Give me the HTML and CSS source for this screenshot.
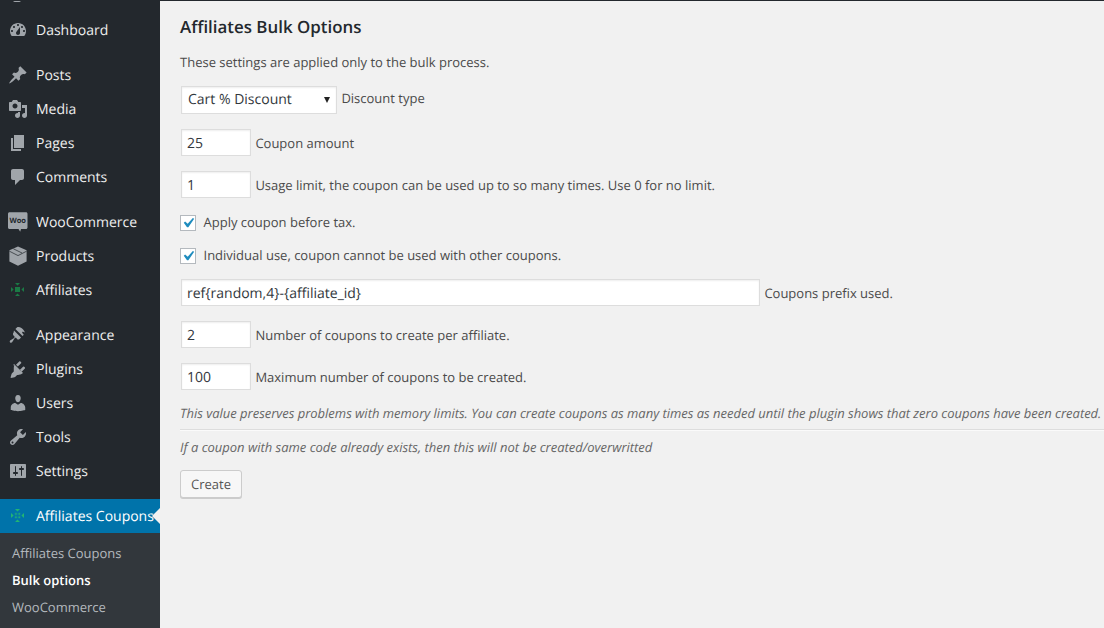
FILE: index.html
```html
<!DOCTYPE html>
<html lang="en">
<head>
    <meta charset="UTF-8">
    <title>Affiliates Bulk Options</title>
    <link rel="stylesheet" href="styles.css">
</head>
<body>

    <!-- Admin menu -->
    <nav class="sidebar">
        <span class="menu-stub"></span>
        <ul class="menu">
            <li class="menu-item"><svg class="icon" viewBox="0 0 20 20"><path fill-rule="evenodd" d="M3.76 16h12.48c1.1-1.37 1.76-3.11 1.76-5 0-4.42-3.58-8-8-8s-8 3.58-8 8c0 1.89.66 3.63 1.76 5zM10 4c.55 0 1 .45 1 1s-.45 1-1 1-1-.45-1-1 .45-1 1-1zM6 6c.55 0 1 .45 1 1s-.45 1-1 1-1-.45-1-1 .45-1 1-1zm8 0c.55 0 1 .45 1 1s-.45 1-1 1-1-.45-1-1 .45-1 1-1zm-5.37 5.55L12 7v6c0 1.1-.9 2-2 2s-2-.9-2-2c0-.57.24-1.08.63-1.45zM4 10c.55 0 1 .45 1 1s-.45 1-1 1-1-.45-1-1 .45-1 1-1zm12 0c.55 0 1 .45 1 1s-.45 1-1 1-1-.45-1-1 .45-1 1-1z"/></svg>Dashboard</li>
            <li class="menu-gap"></li>
            <li class="menu-item"><svg class="icon" viewBox="0 0 20 20"><path d="M10.44 3.02l1.82-1.82 6.36 6.35-1.83 1.82c-1.05-.68-2.48-.57-3.41.36l-.75.75c-.92.93-1.04 2.35-.35 3.41l-1.83 1.82-2.41-2.41-2.8 2.79c-.42.42-3.38 2.71-3.8 2.29s1.86-3.39 2.28-3.81l2.79-2.79L4.1 9.36l1.83-1.82c1.05.69 2.48.57 3.4-.36l.75-.75c.93-.92 1.05-2.35.36-3.41z"/></svg>Posts</li>
            <li class="menu-item"><svg class="icon" viewBox="0 0 20 20"><path fill-rule="evenodd" d="M13 11V4c0-.55-.45-1-1-1h-1.67L9 1H5L3.67 3H2c-.55 0-1 .45-1 1v7c0 .55.45 1 1 1h10c.55 0 1-.45 1-1zM7 4.500c1.380 0 2.500 1.120 2.500 2.500S8.380 9.500 7 9.500 4.500 8.380 4.500 7 5.620 4.500 7 4.500zM14 6h5v10.500c0 1.380-1.120 2.500-2.500 2.500S14 17.880 14 16.500s1.120-2.500 2.500-2.500c.17 0 .34.020.5.050V9h-3V6zm-4 8.050V13h2v3.500c0 1.380-1.120 2.500-2.500 2.500S7 17.880 7 16.500 8.120 14 9.500 14c.17 0 .34.020.5.050z"/></svg>Media</li>
            <li class="menu-item"><svg class="icon" viewBox="0 0 20 20"><path d="M6 15V2h10v13H6zm-1 1h8v2H3V5h2v11z"/></svg>Pages</li>
            <li class="menu-item"><svg class="icon" viewBox="0 0 20 20"><path d="M5 2h9c1.100 0 2 .9 2 2v7c0 1.100-.9 2-2 2h-2l-5 5v-5H5c-1.100 0-2-.9-2-2V4c0-1.100.9-2 2-2z"/></svg>Comments</li>
            <li class="menu-gap"></li>
            <li class="menu-item"><svg class="icon" viewBox="0 0 20 20"><path d="M1.500.3h16.500c.8 0 1.500.7 1.500 1.500v13.700c0 .8-.7 1.500-1.500 1.500h-5l-.8 2.700-1.700-2.700H1.500c-.8 0-1.500-.7-1.500-1.500V1.800C0 1 .7.300 1.500.3z"/><text class="woo-text" x="9.700" y="11.200" text-anchor="middle">Woo</text></svg>WooCommerce</li>
            <li class="menu-item"><svg class="icon" viewBox="0 0 20 20"><path d="M10 .4l8.600 3.800v11.400L10 19.800l-8.600-4.200V4.200z"/><path class="box-lines" d="M1.400 5.200L10 9.600l8.600-4.400M5.400 2.800L14 7"/></svg>Products</li>
            <li class="menu-item"><svg class="icon icon-green" viewBox="0 0 20 20"><path d="M7 7h5v5H7zM7 3h5L9.500 5.600zM7 16h5l-2.500-2.600zM3 7v5l2.600-2.500zM16 7v5l-2.600-2.500z"/></svg>Affiliates</li>
            <li class="menu-gap"></li>
            <li class="menu-item"><svg class="icon" viewBox="0 0 20 20"><path d="M7.400 4l1.500-1.500c1.200-.9 3-.4 4.500.6 1.400 1 2.600 2.400 3.600 4.400-1-.7-2-1.200-3-.6.2 1 .9 2 1.800 2.800l-1.300 1.400zM6 5.400l7 7.100-1.400 1.400c-.7.7-1.900.7-2.600 0l-.7-.8c-.5-.5-1.200-.4-1.700.1l-2.500 4.100c-.5.6-1.400.6-2 .1-.5-.6-.5-1.400 0-1.900l4-2.600c.6-.5.7-1.200.2-1.700l-.8-.8c-.7-.7-.7-1.900 0-2.600z"/></svg>Appearance</li>
            <li class="menu-item"><svg class="icon" viewBox="0 0 20 20"><path d="M13.110 4.360L9.870 7.600 8 5.730l3.240-3.240c.35-.34 1.050-.2 1.560.32.52.51.66 1.210.31 1.550zM5.110 6.130l.91-1.120 9.010 9.010-1.190.84c-.71.71-2.630 1.160-3.820 1.160H9.090l-1.710 1.710c-.8.7-3 .9-4.500 1.300l-.3-.5c.5-1.400.7-3.300 1.400-4.200l1.800-1.800V9.600c0-1.200.1-2.700.63-3.470zM15 7.690l-3.240 3.240 1.870 1.870 3.240-3.240c.34-.34.2-1.040-.32-1.560-.51-.52-1.210-.66-1.550-.31z"/></svg>Plugins</li>
            <li class="menu-item"><svg class="icon" viewBox="0 0 20 20"><path d="M10 9.250c-2.270 0-2.730-3.440-2.730-3.440C7 4.020 7.820 2 9.970 2c2.160 0 2.980 2.020 2.710 3.810 0 0-.41 3.440-2.680 3.440zm0 2.570L12.720 10c2.390 0 4.520 2.330 4.520 4.530v2.490s-3.650 1.130-7.240 1.130c-3.650 0-7.240-1.130-7.240-1.130v-2.490c0-2.250 1.940-4.480 4.470-4.480z"/></svg>Users</li>
            <li class="menu-item"><svg class="icon" viewBox="0 0 20 20"><path fill-rule="evenodd" d="M16.680 9.770c-1.340 1.340-3.300 1.670-4.950.99l-5.410 6.520c-.99.99-2.590.99-3.570 0-.99-.98-.99-2.580 0-3.570l6.520-5.420c-.68-1.650-.35-3.610.99-4.950 1.280-1.280 3.120-1.620 4.720-1.060l-2.890 2.890 2.820 2.820 2.860-2.870c.53 1.580.18 3.400-1.090 4.650zM3.810 16.210c.4.390 1.030.39 1.420 0 .4-.4.400-1.030 0-1.430-.39-.39-1.020-.39-1.420 0-.39.4-.39 1.030 0 1.430z"/></svg>Tools</li>
            <li class="menu-item"><svg class="icon" viewBox="0 0 20 20"><path fill-rule="evenodd" d="M18 16V4c0-.55-.45-1-1-1H3c-.55 0-1 .45-1 1v12c0 .55.45 1 1 1h14c.55 0 1-.45 1-1zM8 11h1c.55 0 1 .45 1 1s-.45 1-1 1H8v1.500c0 .28-.22.5-.5.5s-.5-.22-.5-.5V13H6c-.55 0-1-.45-1-1s.45-1 1-1h1V5.500c0-.28.22-.5.5-.5s.5.22.5.5V11zm5-2h-1c-.55 0-1-.45-1-1s.45-1 1-1h1V5.500c0-.28.22-.5.5-.5s.5.22.5.5V7h1c.55 0 1 .45 1 1s-.45 1-1 1h-1v5.500c0 .28-.22.5-.5.5s-.5-.22-.5-.5V9z"/></svg>Settings</li>
            <li class="menu-gap"></li>
            <li class="menu-item current"><svg class="icon icon-bright" viewBox="0 0 20 20"><defs><pattern id="dots" width="1.400" height="1.400" patternUnits="userSpaceOnUse"><rect width="0.800" height="0.800" fill="#22b573"/></pattern></defs><path d="M7 3h5L9.500 5.600zM7 16h5l-2.500-2.600zM3 7v5l2.600-2.500zM16 7v5l-2.600-2.500z"/><path fill="url(#dots)" d="M6.500 6.500h6v6h-6z"/></svg>Affiliates Coupons</li>
        </ul>
        <ul class="submenu">
            <li>Affiliates Coupons</li>
            <li class="active">Bulk options</li>
            <li>WooCommerce</li>
        </ul>
    </nav>

    <!-- Bulk form -->
    <main class="content">
        <h2 class="title">Affiliates Bulk Options</h2>
        <p class="intro">These settings are applied only to the bulk process.</p>
        <form class="bulk-form">
            <div class="row row-select">
                <select class="field-select"><option>Cart % Discount</option></select>
                <label>Discount type</label>
            </div>
            <div class="row"><input class="field-small" type="text" value="25"><label>Coupon amount</label></div>
            <div class="row"><input class="field-small" type="text" value="1"><label>Usage limit, the coupon can be used up to so many times. Use 0 for no limit.</label></div>
            <div class="row row-check"><input class="check" type="checkbox" checked><label>Apply coupon before tax.</label></div>
            <div class="row row-check row-check-next"><input class="check" type="checkbox" checked><label>Individual use, coupon cannot be used with other coupons.</label></div>
            <div class="row row-prefix"><input class="field-wide" type="text" value="ref{random,4}-{affiliate_id}"><label>Coupons prefix used.</label></div>
            <div class="row"><input class="field-small" type="text" value="2"><label>Number of coupons to create per affiliate.</label></div>
            <div class="row"><input class="field-small" type="text" value="100"><label>Maximum number of coupons to be created.</label></div>
            <p class="note">This value preserves problems with memory limits. You can create coupons as many times as needed until the plugin shows that zero coupons have been created.</p>
            <hr class="divider">
            <p class="note note-last">If a coupon with same code already exists, then this will not be created/overwritted</p>
            <button class="btn" type="button">Create</button>
        </form>
    </main>

</body>
</html>
```

FILE: styles.css
```css
* {
    box-sizing: border-box;
    text-rendering: geometricPrecision;
}

html, body {
    height: 100%;
}

body {
    margin: 0;
    display: flex;
    overflow: hidden;
    background: #f1f1f1;
    border-top: 1px solid #23282d;
    color: #4a4a4a;
    font-family: "Open Sans", sans-serif;
    font-size: 13px;
}

.sidebar {
    position: relative;
    width: 160px;
    flex: none;
    background: #23282d;
    padding-top: 13px;
    margin-top: -1px;
}

.menu-stub {
    position: absolute;
    left: 13px;
    top: 0;
    width: 8px;
    height: 2px;
    background: #a0a5aa;
    border-radius: 0 0 4px 4px;
}

.menu, .submenu {
    list-style: none;
    margin: 0;
    padding: 0;
}

.menu-item {
    position: relative;
    display: flex;
    align-items: center;
    height: 34px;
    padding-left: 8px;
    color: #eee;
    font-size: 14px;
    white-space: nowrap;
}

.menu-gap {
    height: 11px;
}

.icon {
    width: 20px;
    height: 20px;
    margin-right: 8px;
    flex: none;
    fill: #a0a5aa;
}

.icon-green {
    fill: #1b7a45;
}

.icon-bright {
    fill: #22b573;
}

.woo-text {
    fill: #23282d;
    font-family: "Open Sans", sans-serif;
    font-size: 7.500px;
    font-weight: 700;
}

.box-lines {
    fill: none;
    stroke: #23282d;
    stroke-width: 0.700;
}

.current {
    background: #0073aa;
    color: #fff;
}

.current::after {
    content: "";
    position: absolute;
    right: 0;
    top: 9px;
    border: 8px solid transparent;
    border-right-color: #f1f1f1;
    border-left-width: 0;
}

.submenu {
    background: #32373c;
    padding: 7px 0 8px;
}

.submenu li {
    height: 27px;
    line-height: 27px;
    padding-left: 12px;
    color: #b4b9be;
    font-size: 13px;
}

.submenu .active {
    color: #fff;
    font-weight: 600;
}

.content {
    flex: 1;
    min-width: 0;
    padding: 14px 0 0 20px;
}

.title {
    margin: 0;
    color: #23282d;
    font-size: 16.900px;
    font-weight: 600;
    line-height: 24px;
}

.intro {
    margin: 13px 0 0;
    line-height: 20px;
}

.row {
    display: flex;
    align-items: center;
    gap: 4.400px;
    margin: 15px 0 0 1px;
}

.row-select {
    margin-top: 14px;
}

.row-select label {
    margin-top: -4px;
}

.row-check {
    margin: 14px 0 0;
    gap: 7.500px;
    height: 20px;
}

.row-check .check {
    margin-top: 2px;
}

.row-check-next {
    margin-top: 13px;
}

.row-prefix {
    margin-top: 14px;
}

input[type="text"], .field-select {
    height: 27px;
    padding: 1px 5px 0;
    background: #fff;
    border: 1px solid #ddd;
    box-shadow: inset 0 1px 2px rgba(0, 0, 0, 0.07);
    color: #32373c;
    font-family: "Open Sans", sans-serif;
    font-size: 14px;
}

.field-small {
    width: 70px;
}

.field-wide {
    width: 579px;
}

.field-select {
    appearance: none;
    width: 156px;
    height: 28px;
    padding: 0 0 2px 6px;
    border-radius: 0;
    background: #fff url("data:image/svg+xml,%3Csvg xmlns='http://www.w3.org/2000/svg' viewBox='0 0 6 6'%3E%3Cpath fill='%23222' d='M0 0h6L3 6z'/%3E%3C/svg%3E") right 6px center / 6px 6px no-repeat;
}

.check {
    appearance: none;
    flex: none;
    width: 16px;
    height: 16px;
    margin: 0;
    background: #fff url("data:image/svg+xml,%3Csvg xmlns='http://www.w3.org/2000/svg' viewBox='0 0 20 20'%3E%3Cpath fill='%231e8cbe' d='M14.830 4.890l1.340.94-5.810 8.380H9.020L5.780 9.670l1.340-1.250 2.570 2.400z'/%3E%3C/svg%3E") center / 20px no-repeat;
    border: 1px solid #b4b9be;
}

.note {
    margin: 13px 0 0;
    color: #666;
    font-size: 12.970px;
    font-style: italic;
    line-height: 20px;
    white-space: nowrap;
}

.divider {
    margin: 6px 0 0;
    border: 0;
    border-top: 1px solid #ddd;
    border-bottom: 1px solid #fafafa;
}

.note-last {
    margin-top: 6px;
}

.btn {
    display: block;
    width: 62px;
    height: 28px;
    margin-top: 13px;
    background: #f7f7f7;
    border: 1px solid #ccc;
    border-radius: 3px;
    box-shadow: 0 1px 0 #ccc;
    color: #555;
    font-family: "Open Sans", sans-serif;
    font-size: 13px;
}
```
